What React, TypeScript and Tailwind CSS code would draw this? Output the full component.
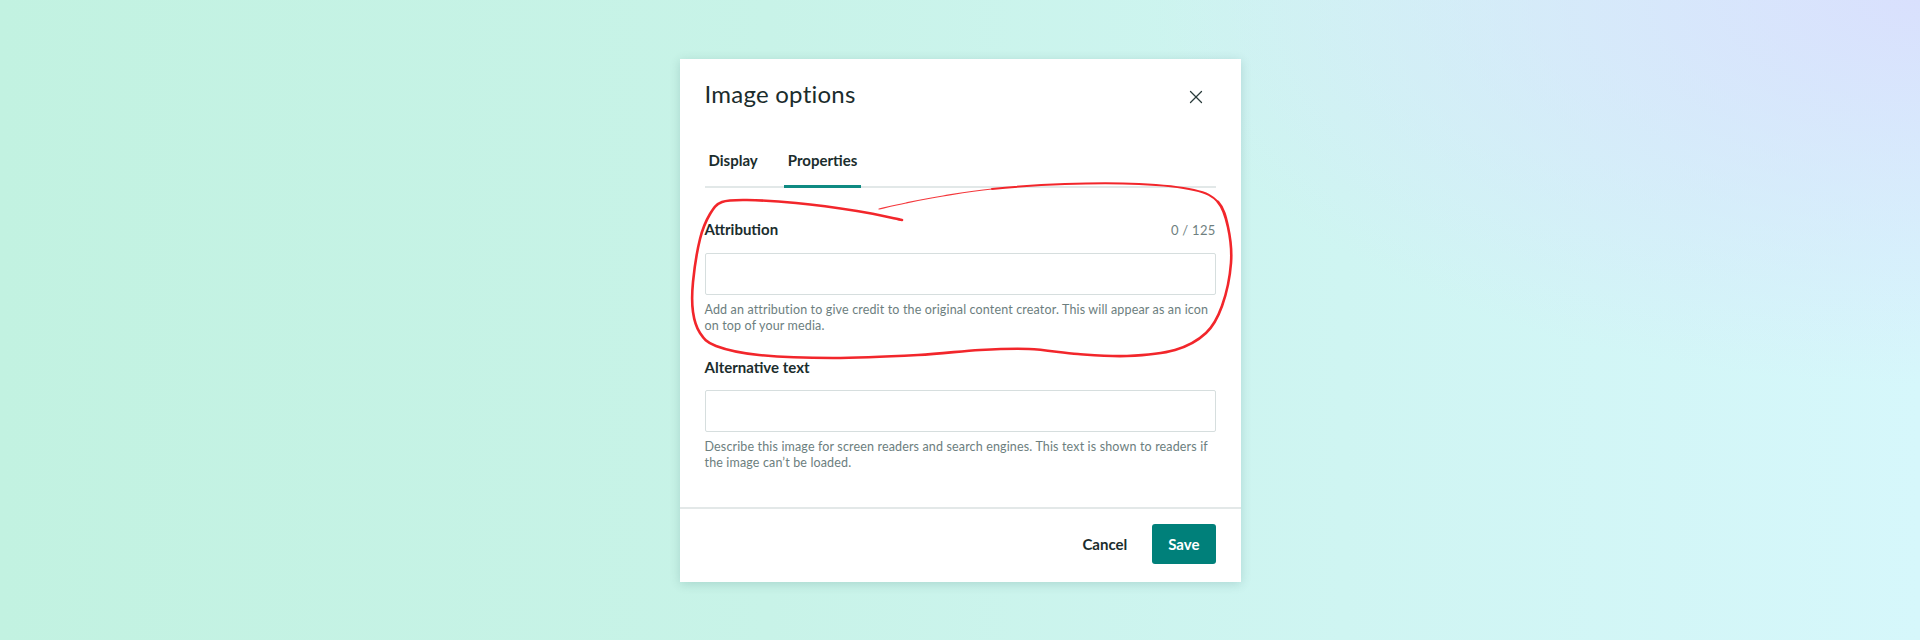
import React from "react";
import { X } from "lucide-react";

type P = [number, number];

const PTS: P[] = [
  [902, 220], [857, 211], [796, 203], [747, 200], [722, 202], [710, 214], [700, 239],
  [693, 282], [693, 312], [700, 333], [716, 346], [759, 355], [833, 358], [918, 355],
  [980, 350], [1029, 349], [1078, 354], [1127, 356], [1175, 350], [1206, 333], [1222, 306],
  [1231, 263], [1228, 227], [1218, 202], [1194, 190], [1139, 184], [1065, 184], [992, 189],
  [943, 196], [906, 203], [879, 209],
];

function seg(points: P[], from: number, to: number): string {
  let d = `M${points[from][0]},${points[from][1]}`;
  for (let i = from; i < to; i++) {
    const p0 = points[i - 1] || points[i];
    const p1 = points[i];
    const p2 = points[i + 1];
    const p3 = points[i + 2] || p2;
    const c1x = p1[0] + (p2[0] - p0[0]) / 6;
    const c1y = p1[1] + (p2[1] - p0[1]) / 6;
    const c2x = p2[0] - (p3[0] - p1[0]) / 6;
    const c2y = p2[1] - (p3[1] - p1[1]) / 6;
    d += ` C${c1x.toFixed(1)},${c1y.toFixed(1)} ${c2x.toFixed(1)},${c2y.toFixed(1)} ${p2[0]},${p2[1]}`;
  }
  return d;
}

function Field({ label, counter, help, className = "" }: { label: string; counter?: string; help: string; className?: string }) {
  return (
    <div className={className}>
      <div className="flex items-baseline justify-between">
        <span className="text-[15px] leading-5 font-bold text-[#1b2d2d]">{label}</span>
        {counter && <span className="text-[13px] leading-5 tracking-[0.02em] text-[#6f7f7f]">{counter}</span>}
      </div>
      <div className="mt-[13px] h-[42px] w-full rounded-[2px] border border-[#d6dede] bg-white" />
      <p className="mt-[7px] text-[12.5px] leading-4 tracking-[0.012em] text-[#6c7e7e]">{help}</p>
    </div>
  );
}

export default function App() {
  return (
    <div className="relative min-h-[640px] w-full overflow-hidden font-['Lato',sans-serif] bg-[image:radial-gradient(ellipse_40%_60%_at_100%_0%,#d9e0fd_0%,rgba(217,224,253,0)_100%),linear-gradient(90deg,#c2f2e1_0%,#c8f3e8_40%,#cff5f2_70%,#d6f7fb_100%)]">
      <div className="flex justify-center pt-[59px]">
        <div className="w-[561px] bg-white shadow-[0_2px_10px_rgba(0,70,70,0.16)]">
          <div className="px-[25px] pt-[19px] pb-9">
            <div className="flex items-start justify-between">
              <h1 className="text-[24px] leading-8 font-normal tracking-[0.01em] text-[#1b2c2c]">Image options</h1>
              <button className="mt-[3px] flex h-8 w-10 items-center justify-center text-[#2a3b3b]">
                <X size={22} strokeWidth={1.4} />
              </button>
            </div>
            <div className="mt-[37px] flex gap-[22px] border-b-2 border-[#e2e8e8]">
              <button className="-mb-[2px] border-b-[3px] border-transparent px-[4px] pb-[15px] text-[15px] leading-5 font-bold text-[#1b2d2d]">
                Display
              </button>
              <button className="-mb-[2px] border-b-[3px] border-[#0e8a82] px-[4px] pb-[15px] text-[15px] leading-5 font-bold text-[#1b2d2d]">
                Properties
              </button>
            </div>
            <div className="pt-[31px]">
              <Field
                label="Attribution"
                counter="0 / 125"
                help="Add an attribution to give credit to the original content creator. This will appear as an icon on top of your media."
              />
              <Field
                className="mt-[23px]"
                label="Alternative text"
                help="Describe this image for screen readers and search engines. This text is shown to readers if the image can’t be loaded."
              />
            </div>
          </div>
          <div className="flex items-center justify-end gap-[9px] border-t-2 border-[#e3e8e8] px-[25px] pt-[15px] pb-[18px]">
            <button className="h-10 px-4 text-[15px] font-bold text-[#1b2d2d]">Cancel</button>
            <button className="h-10 rounded-[3px] bg-[#00807a] px-4 text-[15px] font-bold text-white">Save</button>
          </div>
        </div>
      </div>
      <svg className="pointer-events-none absolute inset-0" width="1920" height="640" viewBox="0 0 1920 640" fill="none">
        <path d={seg(PTS, 0, 23)} stroke="#f2262b" strokeWidth="2.6" strokeLinecap="round" strokeLinejoin="round" />
        <path d={seg(PTS, 23, 27)} stroke="#f2262b" strokeWidth="2" strokeLinecap="round" strokeLinejoin="round" />
        <path d={seg(PTS, 27, 30)} stroke="#f4383c" strokeWidth="1.2" strokeLinecap="round" strokeLinejoin="round" />
      </svg>
    </div>
  );
}
